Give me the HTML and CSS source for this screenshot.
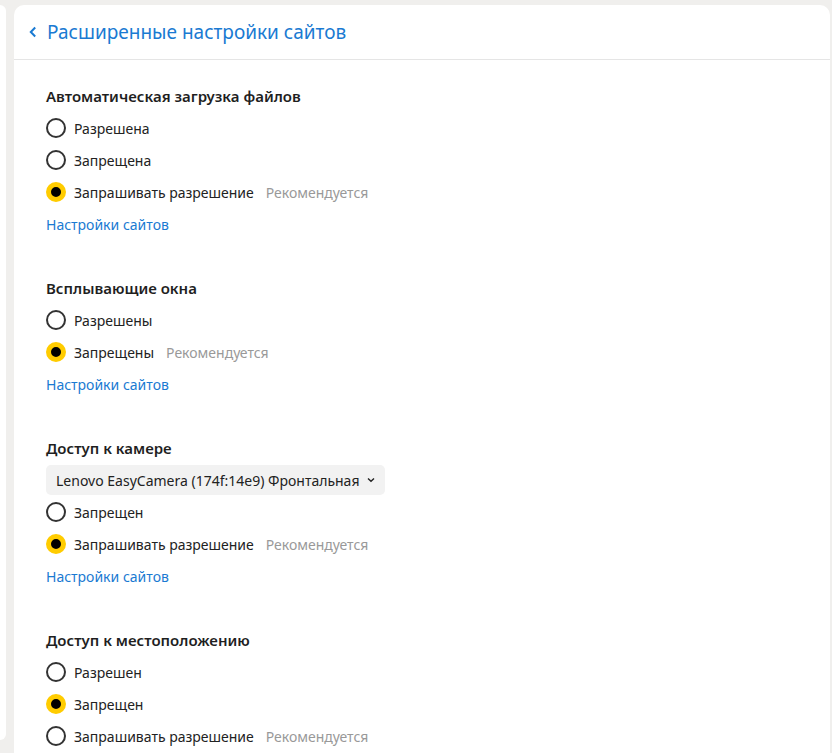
FILE: index.html
```html
<!DOCTYPE html>
<html lang="ru">
<head>
  <meta charset="UTF-8" />
  <title>Расширенные настройки сайтов</title>
  <link rel="stylesheet" href="styles.css">
</head>
<body>
  <div class="page">
    <div class="sidebar"></div>

    <div class="panel">
      <div class="header">
        <a href="#" class="back">
          <svg width="10" height="14" viewBox="0 0 10 14"><path d="M7.2 2.5 L2.8 7 L7.2 11.5" fill="none" stroke="currentColor" stroke-width="2"/></svg>
          Расширенные настройки сайтов
        </a>
      </div>

      <div class="content">
        <!-- Загрузка файлов -->
        <div class="section">
          <div class="title">Автоматическая загрузка файлов</div>
          <label class="option"><span class="radio"></span>Разрешена</label>
          <label class="option"><span class="radio"></span>Запрещена</label>
          <label class="option"><span class="radio on"></span>Запрашивать разрешение <span class="hint">Рекомендуется</span></label>
          <div class="row"><a href="#" class="link">Настройки сайтов</a></div>
        </div>

        <!-- Всплывающие окна -->
        <div class="section">
          <div class="title">Всплывающие окна</div>
          <label class="option"><span class="radio"></span>Разрешены</label>
          <label class="option"><span class="radio on"></span>Запрещены <span class="hint">Рекомендуется</span></label>
          <div class="row"><a href="#" class="link">Настройки сайтов</a></div>
        </div>

        <!-- Камера -->
        <div class="section">
          <div class="title">Доступ к камере</div>
          <div class="row">
            <div class="select">
              Lenovo EasyCamera (174f:14e9) Фронтальная
              <svg width="8" height="6" viewBox="0 0 8 6"><path d="M1 1.5 L4 4.3 L7 1.5" fill="none" stroke="currentColor" stroke-width="1.4"/></svg>
            </div>
          </div>
          <label class="option"><span class="radio"></span>Запрещен</label>
          <label class="option"><span class="radio on"></span>Запрашивать разрешение <span class="hint">Рекомендуется</span></label>
          <div class="row"><a href="#" class="link">Настройки сайтов</a></div>
        </div>

        <!-- Местоположение -->
        <div class="section">
          <div class="title">Доступ к местоположению</div>
          <label class="option"><span class="radio"></span>Разрешен</label>
          <label class="option"><span class="radio on"></span>Запрещен</label>
          <label class="option"><span class="radio"></span>Запрашивать разрешение <span class="hint">Рекомендуется</span></label>
        </div>
      </div>
    </div>
  </div>
</body>
</html>
```

FILE: styles.css
```css
body {
  margin: 0;
  background: #f0efed;
  font-family: "Noto Sans", sans-serif;
  color: #222;
  overflow: hidden;
}

.page {
  display: flex;
  gap: 8px;
  padding: 5px 2px 0 0;
  height: 748px;
}

.sidebar {
  width: 6px;
  height: 735px;
  background: #fff;
  border-radius: 0 10px 10px 0;
}

.panel {
  flex: 1;
  background: #fff;
  border-radius: 10px 10px 0 0;
}

.header {
  height: 54px;
  border-bottom: 1px solid #e5e5e5;
  display: flex;
  align-items: center;
  padding-left: 14px;
}

.back {
  display: flex;
  align-items: center;
  gap: 9px;
  color: #1a7ad2;
  text-decoration: none;
  font-size: 19px;
}

.content {
  padding: 20px 32px 0 32px;
}

.section {
  margin-bottom: 32px;
}

.title,
.option,
.row {
  height: 32px;
  display: flex;
  align-items: center;
}

.title {
  font-size: 15px;
  font-weight: 600;
  color: #1f1f1f;
}

.option {
  font-size: 14px;
  cursor: pointer;
}

.radio {
  width: 20px;
  height: 20px;
  box-sizing: border-box;
  border: 2px solid #333;
  border-radius: 50%;
  margin-right: 8px;
  flex-shrink: 0;
}

.radio.on {
  border: 5px solid #ffcc00;
  background: #000;
}

.hint {
  color: #999;
  margin-left: 12px;
}

.link {
  color: #1a7ad2;
  font-size: 14px;
  text-decoration: none;
}

.select {
  height: 30px;
  display: flex;
  align-items: center;
  gap: 8px;
  padding: 0 10px;
  background: #f2f2f2;
  border-radius: 5px;
  font-size: 14px;
  color: #222;
}
```
